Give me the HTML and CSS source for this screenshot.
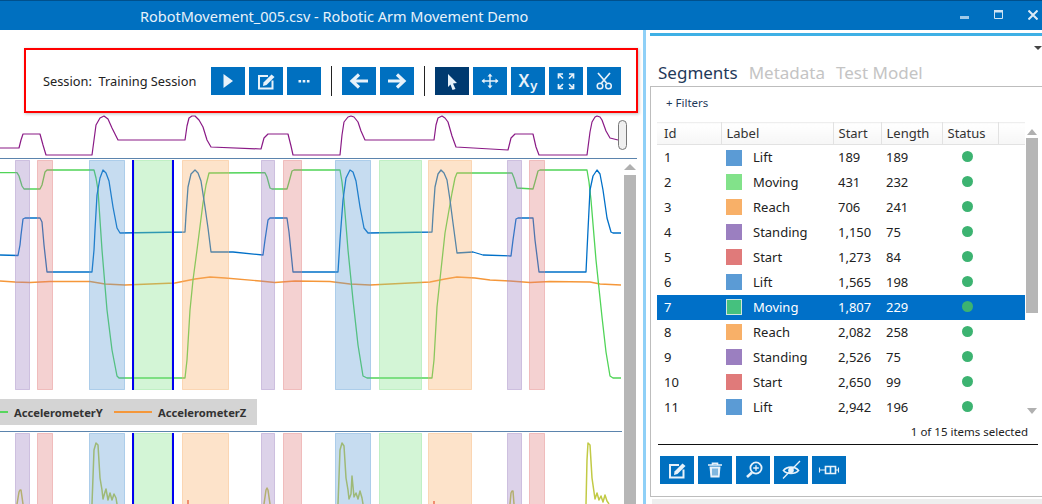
FILE: index.html
```html
<!DOCTYPE html>
<html lang="en">
<head>
    <meta charset="UTF-8">
    <title>Robotic Arm Movement Demo</title>
    <link rel="stylesheet" href="styles.css">
</head>
<body>
    <svg class="icon-defs" width="0" height="0">
        <symbol id="icon-edit" viewBox="0 0 34 28">
            <path d="M19 9H10V21.5H23.5V13.5" fill="none" stroke="currentColor" stroke-width="2"/>
            <path d="M14.5 15.5L22.5 7.5L25.5 10L17.5 18L14 19Z" fill="currentColor"/>
        </symbol>
    </svg>

    <header class="titlebar">
        <span class="title">RobotMovement_005.csv - Robotic Arm Movement Demo</span>
        <div class="window-controls">
            <svg class="win-min" width="10" height="10" viewBox="0 0 10 10"><rect x="0" y="6" width="9" height="3" fill="#9fc9e8"/></svg>
            <svg class="win-max" width="10" height="10" viewBox="0 0 10 10"><path d="M.5 .5H8.5V8.5H.5Z M.5 2H8.5" fill="none" stroke="#cfe3f3" stroke-width="1"/><rect x="0" y="0" width="9" height="2" fill="#cfe3f3"/></svg>
            <svg class="win-close" width="10" height="10" viewBox="0 0 10 10"><path d="M.5 .5L9.5 9.5M9.5 .5L.5 9.5" stroke="#dcebf6" stroke-width="2"/></svg>
        </div>
    </header>

    <main class="app">
        <section class="left-pane">
            <div class="session-bar">
                <span class="session-label">Session:&nbsp; Training Session</span>
                <button class="tool-btn">
                    <svg viewBox="0 0 34 28"><path d="M12.5 7L22 14L12.5 21Z" fill="currentColor"/></svg>
                </button>
                <button class="tool-btn">
                    <svg><use href="#icon-edit"/></svg>
                </button>
                <button class="tool-btn">
                    <svg viewBox="0 0 34 28"><path d="M11.5 13h2.6v2.6h-2.6zM15.7 13h2.6v2.6h-2.6zM19.9 13h2.6v2.6h-2.6z" fill="currentColor"/></svg>
                </button>
                <span class="tool-sep"></span>
                <button class="tool-btn">
                    <svg viewBox="0 0 34 28"><path d="M26 14H11M17 7.5L10 14L17 20.5" fill="none" stroke="currentColor" stroke-width="3.2"/></svg>
                </button>
                <button class="tool-btn">
                    <svg viewBox="0 0 34 28"><path d="M8 14H23M17 7.5L24 14L17 20.5" fill="none" stroke="currentColor" stroke-width="3.2"/></svg>
                </button>
                <span class="tool-sep"></span>
                <button class="tool-btn active">
                    <svg viewBox="0 0 34 28"><path d="M13 7L22 16L18 16.5L20.5 22L17.5 23L15.5 17.5L13 20Z" fill="currentColor"/></svg>
                </button>
                <button class="tool-btn">
                    <svg viewBox="0 0 34 28"><path d="M17 8V20M9.5 14H24.5" stroke="currentColor" stroke-width="1.4" fill="none"/><path d="M17 6.5L19.5 9.5H14.5ZM17 21.5L14.5 18.5H19.5ZM8.5 14L11.5 11.5V16.5ZM25.5 14L22.5 16.5V11.5Z" fill="currentColor"/></svg>
                </button>
                <button class="tool-btn xy-btn">X<sub>y</sub></button>
                <button class="tool-btn">
                    <svg viewBox="0 0 34 28"><path d="M9.5 11.5V7H14M9.5 7L14 11.5M24.5 11.5V7H20M24.5 7L20 11.5M9.5 17V21.5H14M9.5 21.5L14 17M24.5 17V21.5H20M24.5 21.5L20 17" fill="none" stroke="currentColor" stroke-width="1.7"/></svg>
                </button>
                <button class="tool-btn">
                    <svg viewBox="0 0 34 28"><path d="M14.5 16L23 6M19.5 16L11 6" fill="none" stroke="currentColor" stroke-width="1.7"/><circle cx="13" cy="19" r="2.8" fill="none" stroke="currentColor" stroke-width="1.5"/><circle cx="21.5" cy="19" r="2.8" fill="none" stroke="currentColor" stroke-width="1.5"/></svg>
                </button>
            </div>

            <div class="overview">
                <svg width="637" height="45" viewBox="0 113 637 45">
                    <polyline class="line-purple" points="0,148 19,148 21,140 23,134 40,134 43,145 46,155 92,155 94,140 96,125 100,118 104,116 108,119 112,128 118,140 185,140 187,126 189,118 192,116 195,116 199,120 203,127 207,140 211,147 261,149 264,138 268,134 288,134 291,146 293,155 340,155 342,135 344,122 348,117 351,116 354,117 358,122 361,131 365,140 434,140 436,125 438,118 442,116 445,118 448,122 452,136 456,147 508,150 511,138 515,134 533,134 536,147 539,155 587,155 590,132 592,122 595,117 597,116 600,117 602,120 606,131 610,138 618,140"/>
                    <rect class="overview-handle" x="618.5" y="120.5" width="8" height="29" rx="4"/>
                </svg>
            </div>

            <div class="plots">
                <div class="plot-column">
                    <svg class="plot-main" width="622" height="240" viewBox="0 159 622 240">
                        <polyline class="line-orange" points="0,281 15,282 30,282.5 50,281.5 90,281.5 105,284 125,285 150,284 175,283 195,279 210,277 225,278 260,281 275,282.5 295,281 330,281.5 350,284 370,285 400,283.5 430,282 445,279 457,277 475,278 490,280 510,281 530,282.5 550,281.5 590,282 600,284 621,285"/>
                        <polyline class="line-green" points="0,172.7 17,172.7 19,176 22,186 24,189 40,189 42,185 45,172 47,170 94,170 96,178 98,190 102,250 107,310 112,350 117,376 119,378 185,378 187,360 190,310 193,280 197,250 203,203 206,185 209,173 265,172.7 267,177 270,188 272,189 287,189 289,182 292,171 294,170 340,170 342,182 344,200 348,250 353,300 358,345 363,376 367,378 432,378 434,360 437,307 441,270 445,233 449,210 452,193 455,178 457,173 512,173 514,178 517,188 533,189 535,182 538,171 540,170 587,170 589,182 591,200 596,260 602,317 606,352 610,376 613,378 621,378"/>
                        <polyline class="line-blue" points="0,255 18,255.5 20,245 21,235 23,219 25,218 40,218 42,222 44,245 47,272 92,272 94,250 95,230 97,195 100,178 103,170 106,173 109,181 113,207 117,228 120,233 185,232 186,215 188,187 191,174 195,170 198,173 201,181 205,207 208,228 211,252 233,252 263,255 265,240 268,220 270,218 287,218 289,232 293,272 338,272 340,240 343,200 346,178 350,170 353,172 356,181 360,207 364,228 368,233 432,232 433,215 435,187 438,174 441,170 444,173 447,180 450,200 453,223 457,253 473,252 483,255 511,256 513,240 516,219 518,218 533,218 535,240 539,272 586,272 588,230 590,190 593,176 597,170 600,174 603,190 607,218 611,232 613,233 621,233"/>
                        <g id="bands">
                            <rect class="band band-standing" x="15.5" y="160.5" width="14" height="229"/>
                            <rect class="band band-start" x="37.5" y="160.5" width="15" height="229"/>
                            <rect class="band band-lift" x="89.5" y="160.5" width="35" height="229"/>
                            <rect class="band band-moving" x="134" y="160.5" width="38" height="229"/>
                            <rect class="band band-reach" x="182.5" y="160.5" width="46" height="229"/>
                            <rect class="band band-standing" x="261.5" y="160.5" width="13" height="229"/>
                            <rect class="band band-start" x="283.5" y="160.5" width="18" height="229"/>
                            <rect class="band band-lift" x="335.5" y="160.5" width="35" height="229"/>
                            <rect class="band band-moving" x="379.5" y="160.5" width="42" height="229"/>
                            <rect class="band band-reach" x="428.5" y="160.5" width="43" height="229"/>
                            <rect class="band band-standing" x="507.5" y="160.5" width="14" height="229"/>
                            <rect class="band band-start" x="529.5" y="160.5" width="15" height="229"/>
                            <rect class="cursor" x="132" y="160" width="2" height="230"/>
                            <rect class="cursor" x="172" y="160" width="2" height="230"/>
                        </g>
                    </svg>

                    <div class="legend">
                        <span class="legend-swatch swatch-y"></span>
                        <span class="legend-name name-y">AccelerometerY</span>
                        <span class="legend-swatch swatch-z"></span>
                        <span class="legend-name">AccelerometerZ</span>
                    </div>

                    <svg class="plot-lower" width="622" height="73" viewBox="0 432 622 72">
                        <polyline class="line-olive" points="17,504 19,492 20,490 21,490 23,504"/>
                        <polyline class="line-olive" points="92,504 94,450 96,443 98,445 100,478 102,490 103,499 105,492 106,489 108,500 110,493 112,500 114,494 116,498 117,504"/>
                        <polyline class="line-olive" points="264,504 266,490 267,488 268,490 270,504"/>
                        <polyline class="line-olive" points="338,504 340,450 342,443 344,446 346,478 348,490 349,499 351,494 352,476 354,497 356,493 358,499 360,491 362,498 363,504"/>
                        <polyline class="line-olive" points="510,504 511,493 512,491 513,491 514,504"/>
                        <polyline class="line-olive" points="586,504 587,460 588,443 590,445 592,478 594,492 595,499 597,493 599,500 601,496 603,502 605,495 607,501 609,504"/>
                        <path class="line-red" d="M188 504V500M434 504V501"/>
                        <use href="#bands" y="273"/>
                    </svg>
                </div>

                <div class="chart-scroll">
                    <span class="arrow-up"></span>
                    <span class="chart-scroll-thumb"></span>
                </div>
            </div>
        </section>

        <div class="divider"></div>

        <aside class="right-pane">
            <div class="pane-top"></div>
            <div class="menu-row"><span class="menu-arrow"></span></div>
            <nav class="tabs">
                <span class="tab selected">Segments</span>
                <span class="tab">Metadata</span>
                <span class="tab">Test Model</span>
            </nav>

            <div class="panel">
                <div class="filters">+ Filters</div>

                <div class="table-wrap">
                    <table class="segments">
                        <thead>
                            <tr>
                                <th class="col-id">Id</th>
                                <th class="col-label">Label</th>
                                <th class="col-start">Start</th>
                                <th class="col-length">Length</th>
                                <th class="col-status">Status</th>
                                <th class="col-rest"></th>
                            </tr>
                        </thead>
                        <tbody>
                            <tr><td class="col-id">1</td><td class="col-label"><span class="swatch lift"></span>Lift</td><td class="col-start">189</td><td class="col-length">189</td><td><span class="dot"></span></td><td></td></tr>
                            <tr><td class="col-id">2</td><td class="col-label"><span class="swatch moving"></span>Moving</td><td class="col-start">431</td><td class="col-length">232</td><td><span class="dot"></span></td><td></td></tr>
                            <tr><td class="col-id">3</td><td class="col-label"><span class="swatch reach"></span>Reach</td><td class="col-start">706</td><td class="col-length">241</td><td><span class="dot"></span></td><td></td></tr>
                            <tr><td class="col-id">4</td><td class="col-label"><span class="swatch standing"></span>Standing</td><td class="col-start">1,150</td><td class="col-length">75</td><td><span class="dot"></span></td><td></td></tr>
                            <tr><td class="col-id">5</td><td class="col-label"><span class="swatch start"></span>Start</td><td class="col-start">1,273</td><td class="col-length">84</td><td><span class="dot"></span></td><td></td></tr>
                            <tr><td class="col-id">6</td><td class="col-label"><span class="swatch lift"></span>Lift</td><td class="col-start">1,565</td><td class="col-length">198</td><td><span class="dot"></span></td><td></td></tr>
                            <tr class="row-selected"><td class="col-id">7</td><td class="col-label"><span class="swatch moving"></span>Moving</td><td class="col-start">1,807</td><td class="col-length">229</td><td><span class="dot"></span></td><td></td></tr>
                            <tr><td class="col-id">8</td><td class="col-label"><span class="swatch reach"></span>Reach</td><td class="col-start">2,082</td><td class="col-length">258</td><td><span class="dot"></span></td><td></td></tr>
                            <tr><td class="col-id">9</td><td class="col-label"><span class="swatch standing"></span>Standing</td><td class="col-start">2,526</td><td class="col-length">75</td><td><span class="dot"></span></td><td></td></tr>
                            <tr><td class="col-id">10</td><td class="col-label"><span class="swatch start"></span>Start</td><td class="col-start">2,650</td><td class="col-length">99</td><td><span class="dot"></span></td><td></td></tr>
                            <tr><td class="col-id">11</td><td class="col-label"><span class="swatch lift"></span>Lift</td><td class="col-start">2,942</td><td class="col-length">196</td><td><span class="dot"></span></td><td></td></tr>
                        </tbody>
                    </table>
                    <div class="table-scroll">
                        <span class="arrow-up small"></span>
                        <span class="table-scroll-thumb"></span>
                        <span class="arrow-down"></span>
                    </div>
                </div>

                <div class="selection-count">1 of 15 items selected</div>

                <div class="actions">
                    <button class="tool-btn">
                        <svg><use href="#icon-edit"/></svg>
                    </button>
                    <button class="tool-btn">
                        <svg viewBox="0 0 34 28"><path d="M10 9H24M14.5 9V7.2H19.5V9" fill="none" stroke="currentColor" stroke-width="1.6"/><path d="M11.5 10.5H22.5L21.5 21.5H12.5Z" fill="currentColor"/><path d="M15 12.5V19.5M17 12.5V19.5M19 12.5V19.5" stroke="#0070c0" stroke-width=".9"/></svg>
                    </button>
                    <button class="tool-btn">
                        <svg viewBox="0 0 34 28"><circle cx="20" cy="12" r="5.6" fill="none" stroke="currentColor" stroke-width="1.8"/><path d="M16 16.5L11 21" stroke="currentColor" stroke-width="2.6"/><path d="M17.2 12H22.8M20 9.2V14.8" stroke="currentColor" stroke-width="1.3"/></svg>
                    </button>
                    <button class="tool-btn">
                        <svg viewBox="0 0 34 28"><path d="M9.5 14.5C13 10 21 10 24.5 14.5C21 18.5 13 18.5 9.5 14.5Z" fill="none" stroke="currentColor" stroke-width="1.7"/><circle cx="17" cy="14.3" r="2.8" fill="currentColor"/><path d="M9 22.5L26 5" stroke="currentColor" stroke-width="1.3"/></svg>
                    </button>
                    <button class="tool-btn">
                        <svg viewBox="0 0 34 28"><path d="M13.5 10.5H23.5V17.5H13.5ZM18.5 10.5V17.5" fill="none" stroke="currentColor" stroke-width="1.6"/><path d="M7.5 11.5V16.5M26.5 11.5V16.5M7.5 14H13M24 14H26.5" fill="none" stroke="currentColor" stroke-width="1.1"/></svg>
                    </button>
                </div>
            </div>
            <div class="pane-bottom"></div>
        </aside>
    </main>
</body>
</html>
```

FILE: styles.css
```css
* {
    box-sizing: border-box;
}
body {
    margin: 0;
    width: 1042px;
    height: 504px;
    overflow: hidden;
    background: #fff;
    color: #222;
    font-family: "Noto Sans", "Open Sans", sans-serif;
}
.icon-defs {
    position: absolute;
}

/* title bar */
.titlebar {
    display: flex;
    align-items: center;
    height: 30px;
    padding-left: 140px;
    background: #0070c0;
    border-top: 1px solid #00508c;
    color: #e8f2fa;
}
.title {
    font-size: 14.5px;
}
.window-controls {
    display: flex;
    margin-left: auto;
    margin-right: 4px;
    margin-top: -1px;
    gap: 24px;
}

.app {
    display: flex;
    height: 474px;
}

/* left side */
.left-pane {
    width: 643px;
    flex: none;
}
.session-bar {
    display: flex;
    align-items: center;
    width: 614px;
    height: 65px;
    margin: 18px 0 0 24px;
    padding: 1px 0 0 17px;
    border: 2px solid #f00;
    box-shadow: 1px 1px 3px rgba(0, 0, 0, 0.25);
    gap: 4px;
}
.session-label {
    width: 164px;
    font-size: 12.8px;
    white-space: nowrap;
}
.tool-btn {
    width: 34px;
    height: 28px;
    flex: none;
    padding: 0;
    border: none;
    background: #0070c0;
    color: #e8f2fa;
}
.tool-btn svg {
    display: block;
    width: 34px;
    height: 28px;
}
.tool-btn.active {
    background: #003a70;
}
.xy-btn {
    font-family: "Noto Sans", sans-serif;
    font-size: 17px;
    font-weight: 600;
    line-height: 26px;
}
.xy-btn sub {
    font-size: 13px;
    line-height: 0;
    vertical-align: -3px;
    margin-left: 1px;
}
.tool-sep {
    width: 1px;
    height: 30px;
    margin: 0 6px;
    background: #222;
}

.overview {
    width: 637px;
    border-bottom: 1px solid #5b84ad;
}
.overview svg {
    display: block;
}
.overview-handle {
    fill: #f0f0f0;
    stroke: #777;
}
.plots {
    display: flex;
    height: 345px;
}
.plot-column {
    width: 622px;
}
.plot-main {
    display: block;
}
.plot-lower {
    display: block;
    border-top: 1px solid #5b84ad;
}
polyline, .line-red {
    fill: none;
    stroke-linejoin: round;
}
.line-purple {
    stroke: #8a1a86;
    stroke-width: 1.2;
}
.line-green {
    stroke: #50d457;
    stroke-width: 1.3;
}
.line-blue {
    stroke: #0070c8;
    stroke-width: 1.3;
}
.line-orange {
    stroke: #f5973a;
    stroke-width: 1.4;
}
.line-olive {
    stroke: #c2ca45;
    stroke-width: 1.5;
}
.line-red {
    stroke: #e0392f;
    stroke-width: 1.3;
}
.band {
    stroke-width: 1;
    fill-opacity: 0.35;
    stroke-opacity: 0.4;
}
.band-lift {
    fill: #5b9bd5;
    stroke: #5b9bd5;
}
.band-moving {
    fill: #82e28a;
    stroke: #82e28a;
}
.band-reach {
    fill: #f8b068;
    stroke: #f8b068;
}
.band-standing {
    fill: #9b7fc0;
    stroke: #9b7fc0;
}
.band-start {
    fill: #e07a7a;
    stroke: #e07a7a;
}
.cursor {
    fill: #0000f0;
}

.legend {
    display: flex;
    align-items: center;
    width: 257px;
    height: 26px;
    margin-bottom: 6px;
    background: #d4d4d4;
    font-size: 11.2px;
    font-weight: 700;
    color: #333;
}
.legend-swatch {
    height: 2px;
}
.swatch-y {
    width: 8px;
    background: #58d65e;
}
.swatch-z {
    width: 38px;
    margin-left: 11px;
    background: #f5973a;
}
.legend-name {
    margin-left: 6px;
    white-space: nowrap;
}
.name-y {
    width: 89px;
}

.chart-scroll {
    display: flex;
    flex-direction: column;
    align-items: center;
    width: 12px;
    margin-left: 2px;
    padding-top: 5px;
}
.arrow-up {
    width: 0;
    height: 0;
    border-left: 6px solid transparent;
    border-right: 6px solid transparent;
    border-bottom: 6px solid #b0b0b0;
}
.arrow-up.small {
    border-left-width: 5px;
    border-right-width: 5px;
}
.arrow-down {
    width: 0;
    height: 0;
    margin-top: auto;
    margin-bottom: 6px;
    border-left: 5px solid transparent;
    border-right: 5px solid transparent;
    border-top: 6px solid #b0b0b0;
}
.chart-scroll-thumb {
    width: 12px;
    flex: 1;
    margin-top: 5px;
    background: #b6b6b6;
}
.divider {
    width: 3px;
    flex: none;
    background: #8fd0f7;
}

/* right side */
.right-pane {
    width: 392px;
    margin-left: 4px;
    flex: none;
}
.pane-top {
    height: 3px;
    margin-top: 3px;
    background: #3fb0e5;
}
.menu-row {
    display: flex;
    justify-content: flex-end;
    height: 14px;
    padding-top: 10px;
}
.menu-arrow {
    width: 0;
    height: 0;
    border-left: 4px solid transparent;
    border-right: 4px solid transparent;
    border-top: 4px solid #444;
}
.tabs {
    display: flex;
    align-items: flex-end;
    height: 36px;
    padding-left: 8px;
    gap: 11px;
}
.tab {
    font-size: 17px;
    line-height: 26px;
    color: #c4c4c4;
}
.tab.selected {
    color: #1f3a5a;
}
.panel {
    height: 411px;
    padding-left: 6px;
    border-left: 1px solid #bdbdbd;
    border-top: 1px solid #bdbdbd;
    border-bottom: 1px solid #bdbdbd;
}
.filters {
    height: 35px;
    padding: 8px 0 0 9px;
    font-size: 11.5px;
    color: #1f3a5a;
}
.table-wrap {
    display: flex;
}
.segments {
    width: 368px;
    flex: none;
    table-layout: fixed;
    border-collapse: collapse;
    font-size: 13px;
}
.segments th {
    height: 22px;
    padding: 0 0 2px 5px;
    border-top: 1px solid #eee;
    border-bottom: 1px solid #e2e2e2;
    border-right: 1px solid #e2e2e2;
    background: linear-gradient(#fff, #f6f6f6);
    font-weight: 400;
    text-align: left;
    color: #333;
}
.segments th.col-id {
    padding-left: 7px;
    width: 64px;
}
.segments th.col-label {
    width: 112px;
}
.segments th.col-start {
    width: 48px;
}
.segments th.col-length {
    width: 61px;
}
.segments th.col-status {
    width: 56px;
}
.segments th.col-rest {
    border-right: none;
}
.segments td {
    height: 25px;
    padding: 0;
    white-space: nowrap;
}
.segments td.col-id {
    padding-left: 7px;
}
.segments td.col-label {
    padding-left: 5px;
}
.segments td.col-start,
.segments td.col-length {
    padding-left: 5px;
}
.swatch {
    display: inline-block;
    width: 16px;
    height: 16px;
    margin-right: 11px;
    vertical-align: middle;
    position: relative;
    top: -1px;
}
.lift {
    background: #5b9bd5;
}
.moving {
    background: #82e28a;
}
.reach {
    background: #f8b068;
}
.standing {
    background: #9b7fc0;
}
.start {
    background: #e07a7a;
}
.dot {
    display: block;
    width: 11px;
    height: 11px;
    margin: -2px 0 0 20px;
    border-radius: 50%;
    background: #3cb371;
}
.row-selected td {
    background: #0070c8;
    color: #fff;
}
.row-selected .swatch {
    background: #45c17e;
    outline: 1px solid #cfe6dc;
    outline-offset: -1px;
}
.table-scroll {
    display: flex;
    flex-direction: column;
    align-items: center;
    width: 12px;
    margin-left: 1px;
    padding-top: 7px;
}
.table-scroll-thumb {
    width: 12px;
    height: 175px;
    margin-top: 3px;
    background: #b6b6b6;
}
.selection-count {
    width: 370px;
    height: 24px;
    margin-left: 1px;
    padding-top: 4px;
    font-size: 11.5px;
    text-align: right;
}
.actions {
    display: flex;
    width: 380px;
    margin-left: 1px;
    padding: 11px 0 0 2px;
    border-top: 1px solid #111;
    gap: 4px;
}
.pane-bottom {
    height: 5px;
    margin: 2px 0 0 2px;
    background: #eee;
}
```
